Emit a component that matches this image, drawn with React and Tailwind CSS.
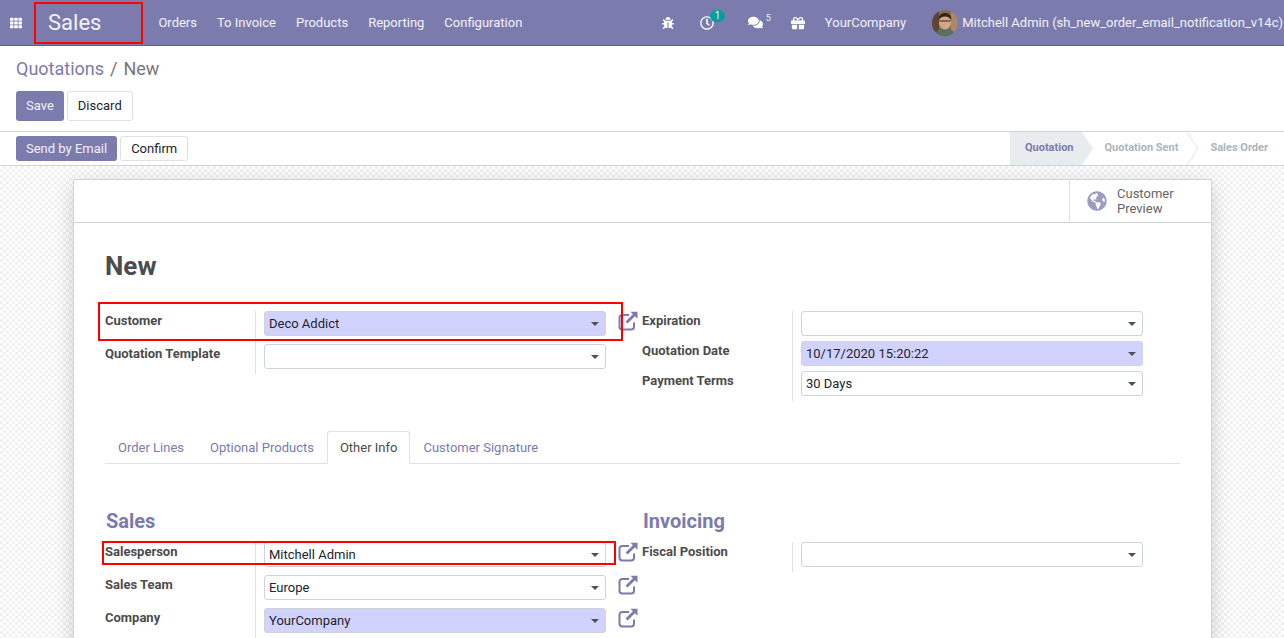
import React from "react";
import { FaBug, FaRegClock, FaComments, FaGift, FaGlobeAmericas, FaTh } from "react-icons/fa";

const font = { fontFamily: "Roboto, sans-serif" };

function ExternalLink() {
  return (
    <svg width="20" height="20" viewBox="0 0 20 20" fill="none" className="shrink-0 text-[#7c7bad]">
      <path d="M16 11.5v4.2a2.8 2.8 0 0 1-2.8 2.8H4.3a2.8 2.8 0 0 1-2.8-2.8V6.8A2.8 2.8 0 0 1 4.3 4H11" stroke="currentColor" strokeWidth="2" />
      <path d="M12.5 0.8h7v7l-2.6-2.5-7.3 7.3-2-2 7.3-7.3z" fill="currentColor" />
    </svg>
  );
}

function Select({ value, required }) {
  return (
    <div className={`relative h-[25px] w-[342px] shrink-0 rounded-[3px] border border-[#ced4da] pl-1 text-[13px] leading-[24px] text-[#212529] ${required ? "bg-[#d2d2ff]" : "bg-white"}`}>
      {value}
      <span className="absolute right-[6px] top-[10px] h-0 w-0 border-x-[4px] border-t-[4px] border-x-transparent border-t-[#495057]" />
    </div>
  );
}

function Field({ label, value, required, link, last }) {
  return (
    <div className="flex">
      <div className={`w-[151px] shrink-0 border-r border-[#dee2e6] text-[13px] font-bold leading-[20px] text-[#4c4c4c] ${link && !last ? "h-[33px]" : "h-[30px]"}`}>
        {label}
      </div>
      <div className="ml-2 flex items-start">
        <Select value={value} required={required} />
        {link && (
          <div className="ml-3">
            <ExternalLink />
          </div>
        )}
      </div>
    </div>
  );
}

function NavLink({ children }) {
  return <a className="px-[10px] text-[13px] text-white/90">{children}</a>;
}

function Avatar() {
  return (
    <svg width="26" height="26" viewBox="0 0 26 26" className="shrink-0 rounded-full">
      <rect width="26" height="26" fill="#8a6a4e" />
      <rect x="0" y="0" width="7" height="26" fill="#5c4436" />
      <rect x="19" y="0" width="7" height="26" fill="#a98a68" />
      <path d="M3 26c1-6 5-8 10-8s9 2 10 8z" fill="#59705f" />
      <ellipse cx="13" cy="12.5" rx="6" ry="7" fill="#d7a584" />
      <path d="M6.5 10c0-5 3-7 6.5-7s6.5 2 6.5 7c-2-3-4-3.5-6.500-3.500S8.500 7 6.500 10z" fill="#2f231d" />
      <path d="M7.500 11h11" stroke="#2b2b2b" strokeWidth="1.200" />
    </svg>
  );
}

function StatusBar() {
  return (
    <div className="flex h-full items-stretch text-[11px] font-bold">
      <div className="relative flex items-center bg-[#e9ecef] pl-[15px] pr-2 text-[#7c7bad]">
        Quotation
        <svg width="11" height="33" viewBox="0 0 11 33" className="absolute left-full top-0">
          <polygon points="0,0 11,16.500 0,33" fill="#e9ecef" />
        </svg>
      </div>
      <div className="relative ml-[11px] flex items-center pl-3 pr-[9px] text-[#adb5bd]">
        Quotation Sent
        <svg width="11" height="33" viewBox="0 0 11 33" className="absolute left-full top-0">
          <polyline points="0,0 11,16.500 0,33" fill="none" stroke="#dee2e6" />
        </svg>
      </div>
      <div className="ml-[11px] flex items-center pl-3 pr-4 text-[#adb5bd]">Sales Order</div>
    </div>
  );
}

function Tab({ children, active }) {
  if (active) {
    return (
      <div className="-mb-px h-[33px] rounded-t-[3px] border border-b-white border-[#dee2e6] bg-white px-3 text-[13px] leading-[31px] text-[#4c4c4c]">
        {children}
      </div>
    );
  }
  return <div className="h-[33px] px-[13px] text-[13px] leading-[33px] text-[#7c7bad]">{children}</div>;
}

export default function App() {
  return (
    <div className="relative h-[638px] w-[1284px] overflow-hidden bg-white" style={font}>
      <nav className="flex h-[46px] items-center border-b border-[#5f5e97] bg-[#7c7bad] text-white">
        <FaTh size={12} className="ml-[10px] mr-[26px] shrink-0" />
        <div className="mr-[47px] text-[22px] text-white/90">Sales</div>
        <NavLink>Orders</NavLink>
        <NavLink>To Invoice</NavLink>
        <NavLink>Products</NavLink>
        <NavLink>Reporting</NavLink>
        <NavLink>Configuration</NavLink>
        <div className="ml-auto flex items-center text-white/90">
          <FaBug size={12} className="mr-[26px] shrink-0 text-white" />
          <div className="relative mr-[34px]">
            <FaRegClock size={14} className="text-white" />
            <span className="absolute left-[10px] top-[-6px] h-3 rounded-full bg-[#00a09d] px-[5px] text-[10px] leading-3">1</span>
          </div>
          <FaComments size={15} className="mr-[3px] text-white" />
          <span className="mr-[20px] -mt-2 text-[9px]">5</span>
          <FaGift size={14} className="mr-[20px] text-white" />
          <span className="mr-[26px] text-[13px]">YourCompany</span>
          <Avatar />
          <span className="ml-1 whitespace-nowrap pr-px text-[13px]">Mitchell Admin (sh_new_order_email_notification_v14c)</span>
        </div>
      </nav>

      <div className="h-[86px] border-b border-[#ced4da] px-4">
        <div className="flex h-[45px] items-center text-[18px] text-[#777]">
          <span className="text-[#7c7bad]">Quotations</span>
          <span className="mx-[6px]">/</span>
          <span>New</span>
        </div>
        <div className="flex gap-[3px]">
          <button className="h-[30px] rounded-[3px] bg-[#7c7bad] px-[10px] text-[13px] text-white/90">Save</button>
          <button className="h-[30px] rounded-[3px] border border-[#dee2e6] bg-white px-[10px] text-[13px] text-[#212529]">Discard</button>
        </div>
      </div>

      <div className="flex h-[34px] items-stretch justify-between border-b border-[#ced4da] pl-4">
        <div className="flex items-center gap-[3px]">
          <button className="h-[25px] rounded-[3px] bg-[#7c7bad] px-[10px] text-[13px] text-white/90">Send by Email</button>
          <button className="h-[25px] rounded-[3px] border border-[#dee2e6] bg-white px-[10px] text-[13px] text-[#212529]">Confirm</button>
        </div>
        <StatusBar />
      </div>

      <div className="h-[472px] bg-[repeating-conic-gradient(#f1f1f1_0_25%,#ffffff_0_50%)] bg-[length:6px_6px] pl-[73px] pt-[13px]">
        <div className="h-[500px] w-[1139px] border border-[#ced4da] bg-white shadow-[0_5px_20px_-1px_rgba(0,0,0,0.2)]">
          <div className="flex h-[43px] justify-end border-b border-[#ced4da]">
            <div className="flex w-[142px] items-center border-l border-[#dee2e6] pl-[17px]">
              <FaGlobeAmericas size={20} className="text-[#9c9bc4]" />
              <div className="ml-[10px] text-[13px] leading-[15px] text-[#666]">
                Customer
                <br />
                Preview
              </div>
            </div>
          </div>

          <div className="pl-[31px] pr-[31px]">
            <h1 className="mt-[27px] h-[61px] text-[26px] font-bold leading-[33px] text-[#4c4c4c]">New</h1>
            <div className="flex">
              <div className="w-[537px]">
                <Field label="Customer" value="Deco Addict" required link />
                <Field label="Quotation Template" last link={false} />
              </div>
              <div>
                <Field label="Expiration" />
                <Field label="Quotation Date" value="10/17/2020 15:20:22" required />
                <Field label="Payment Terms" value="30 Days" />
              </div>
            </div>

            <div className="mt-[30px] flex h-[33px] border-b border-[#dee2e6]">
              <Tab>Order Lines</Tab>
              <Tab>Optional Products</Tab>
              <Tab active>Other Info</Tab>
              <Tab>Customer Signature</Tab>
            </div>

            <div className="mt-[44px] flex">
              <div className="w-[537px]">
                <h2 className="mb-[8px] pl-px text-[20px] font-bold leading-[26px] text-[#7c7bad]">Sales</h2>
                <Field label="Salesperson" value="Mitchell Admin" link />
                <Field label="Sales Team" value="Europe" link />
                <Field label="Company" value="YourCompany" required link />
              </div>
              <div>
                <h2 className="mb-[8px] pl-px text-[20px] font-bold leading-[26px] text-[#7c7bad]">Invoicing</h2>
                <Field label="Fiscal Position" />
              </div>
            </div>
          </div>
        </div>
      </div>

      {/* red annotation boxes sit on top of the page */}
      <div className="pointer-events-none absolute left-[34px] top-[2px] h-[42px] w-[109px] border-2 border-[#f00]" />
      <div className="pointer-events-none absolute left-[98px] top-[302px] h-[39px] w-[525px] border-2 border-[#f00]" />
      <div className="pointer-events-none absolute left-[102px] top-[541px] h-[24px] w-[514px] border-2 border-[#f00]" />
    </div>
  );
}
